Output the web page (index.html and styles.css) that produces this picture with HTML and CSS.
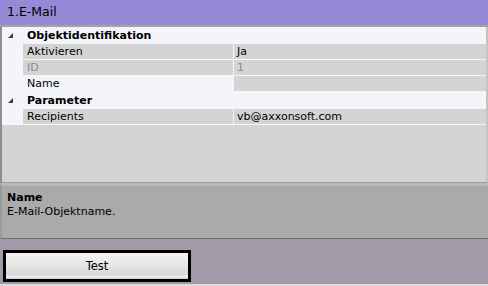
FILE: index.html
```html
<!DOCTYPE html>
<html lang="de">
<head>
  <meta charset="UTF-8">
  <title>1.E-Mail</title>
  <link rel="stylesheet" href="styles.css">
</head>
<body>
  <div class="window">
    <div class="title">1.E-Mail</div>

    <!-- Property grid -->
    <div class="grid">
      <div class="cat-row"><span class="expander"></span>Objektidentifikation</div>
      <div class="prop-row">
        <div class="gutter"></div>
        <div class="label">Aktivieren</div>
        <div class="value">Ja</div>
      </div>
      <div class="prop-row disabled">
        <div class="gutter"></div>
        <div class="label">ID</div>
        <div class="value">1</div>
      </div>
      <div class="prop-row selected">
        <div class="gutter"></div>
        <div class="label">Name</div>
        <div class="value"></div>
      </div>
      <div class="cat-row"><span class="expander"></span>Parameter</div>
      <div class="prop-row">
        <div class="gutter"></div>
        <div class="label">Recipients</div>
        <div class="value">vb@axxonsoft.com</div>
      </div>
    </div>

    <!-- Description of the selected property -->
    <div class="help">
      <div class="help-title">Name</div>
      <div class="help-text">E-Mail-Objektname.</div>
    </div>

    <div class="footer">
      <button class="test-button">Test</button>
    </div>
  </div>
</body>
</html>
```

FILE: styles.css
```css
html, body {
  margin: 0;
  padding: 0;
}
body {
  font-family: "DejaVu Sans", Verdana, sans-serif;
  font-size: 11px;
  color: #000;
  background: #d8d8d8;
}
.window {
  width: 488px;
  height: 284px;
  display: flex;
  flex-direction: column;
  border-bottom: 2px solid #dcdcdc;
}
.title {
  height: 25px;
  line-height: 24px;
  padding-left: 7px;
  font-size: 12.5px;
  background: #9689d6;
  border-bottom: 2px solid #a3a3a3;
}
/* Property grid */
.grid {
  height: 155px;
  flex-shrink: 0;
  background: #d4d4d4;
  border-left: 2px solid #8f8f8f;
  border-right: 2px solid #c4c4c4;
  border-bottom: 1px solid #9d9d9d;
}
.cat-row {
  height: 17px;
  line-height: 17px;
  background: #f3f5fa;
  font-weight: bold;
  display: flex;
  align-items: center;
  padding-left: 6px;
}
.expander {
  width: 0;
  height: 0;
  border-left: 5px solid transparent;
  border-bottom: 5px solid #404040;
  margin-right: 14px;
}
.prop-row {
  display: flex;
  height: 15px;
  line-height: 15px;
  border-bottom: 1px solid #f6f6f6;
}
.gutter {
  width: 21px;
  background: #f3f5fa;
}
.label {
  width: 206px;
  padding-left: 4px;
  background: #d4d4d4;
  border-right: 1px solid #f6f6f6;
}
.value {
  flex: 1;
  padding-left: 3px;
  background: #d4d4d4;
}
.disabled .label,
.disabled .value {
  color: #8a8a8a;
}
.selected .label {
  background: #f3f5fa;
}
/* Help panel */
.help {
  height: 47px;
  flex-shrink: 0;
  background: #aaaaaa;
  border-top: 3px solid #b9b9b9;
  border-left: 2px solid #9a9a9a;
  border-bottom: 1px solid #6e6e6e;
  padding: 5px 0 0 5px;
  line-height: 14px;
}
.help-title {
  font-weight: bold;
}
.footer {
  flex: 1;
  background: #a29aa8;
  padding: 11px 0 0 3px;
}
.test-button {
  width: 188px;
  height: 32px;
  border: 3px solid #000;
  background: linear-gradient(#f3f3f3, #e6e6e6 45%, #d8d8d8 85%, #f4f4f4 90%, #cfcfcf);
  font-family: "DejaVu Sans", Verdana, sans-serif;
  font-size: 11.5px;
  color: #000;
  padding: 0;
}
```
